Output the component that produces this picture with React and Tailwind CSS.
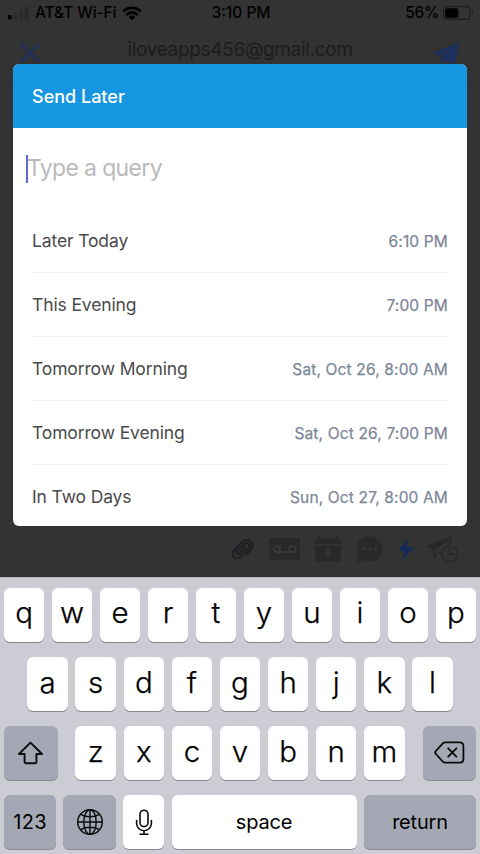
import React, { useState } from "react";
import clsx from "clsx";

const options = [
  { label: "Later Today", time: "6:10 PM" },
  { label: "This Evening", time: "7:00 PM" },
  { label: "Tomorrow Morning", time: "Sat, Oct 26, 8:00 AM" },
  { label: "Tomorrow Evening", time: "Sat, Oct 26, 7:00 PM" },
  { label: "In Two Days", time: "Sun, Oct 27, 8:00 AM" },
];

const SignalIcon = () => (
  <svg width="21" height="14" viewBox="0 0 21 14">
    <rect x="0" y="9" width="3.6" height="4.5" rx="1" fill="#000" />
    <rect x="5.6" y="6.5" width="3.6" height="7" rx="1" fill="#2a2a2a" />
    <rect x="11.2" y="3.5" width="3.6" height="10" rx="1" fill="#2a2a2a" />
    <rect x="16.8" y="0.5" width="3.6" height="13" rx="1" fill="#2a2a2a" />
  </svg>
);

const WifiIcon = () => (
  <svg width="20" height="15" viewBox="0 0 20 15" fill="none" stroke="#000" strokeWidth="2.8">
    <path d="M1.2 5.6a12.4 12.4 0 0 1 17.6 0" />
    <path d="M4.3 8.9a8 8 0 0 1 11.4 0" />
    <path d="M10 14.4 6.6 11a4.8 4.8 0 0 1 6.8 0z" fill="#000" stroke="none" />
  </svg>
);

const BatteryIcon = () => (
  <svg width="31" height="14" viewBox="0 0 31 14">
    <rect x="0.6" y="0.6" width="26.3" height="12.8" rx="3.4" fill="none" stroke="#1c1c1c" strokeWidth="1.1" />
    <rect x="2.2" y="2.2" width="13" height="9.6" rx="1.6" fill="#000" />
    <path d="M28.6 4.6c1.8.9 1.8 3.9 0 4.8z" fill="#1c1c1c" />
  </svg>
);

const CloseIcon = () => (
  <svg width="20" height="20" viewBox="0 0 20 20" stroke="#1e3059" strokeWidth="2.8">
    <path d="M1 1l18 18M19 1L1 19" />
  </svg>
);

const SendIcon = () => (
  <svg width="27" height="25" viewBox="0 0 27 25" fill="#1c2f5e">
    <path d="M26 0.5 0.5 10.8l6.4 3.4z" />
    <path d="M26 0.5 8 14.9v8.3l3.7-5.3z" />
    <path d="M26 0.5 10.6 16.6l10.6 6.6z" />
  </svg>
);

const PaperclipIcon = () => (
  <svg width="24" height="22" viewBox="0 0 24 22" fill="none" stroke="#1d1e21" strokeWidth="2" strokeLinecap="round">
    <path d="M15.6 9.3 9.4 15.4a1.7 1.7 0 0 1-2.5-2.4l7.4-7a3.1 3.1 0 0 1 4.4 4.4l-8.3 8.3a4.6 4.6 0 0 1-6.6-6.4L12.6 3.6a5.8 5.8 0 0 1 8.3 8.1l-5 5.1" />
  </svg>
);

const VoicemailIcon = () => (
  <svg width="31" height="22" viewBox="0 0 31 22">
    <rect width="31" height="22" rx="1" fill="#27292b" />
    <g fill="none" stroke="#38393b" strokeWidth="2">
      <circle cx="8" cy="11" r="3.1" />
      <circle cx="23.5" cy="11" r="3.1" />
      <path d="M8 14.1h15.5" />
    </g>
  </svg>
);

const CalendarIcon = () => (
  <svg width="26" height="25" viewBox="0 0 26 25" fill="#27292b">
    <path d="M0 2h2.8V0h3.4v2h13.6V0h3.4v2H26v5H0z" />
    <path d="M0.5 8.8h25v15.7h-25z" />
    <path d="M13 11.5v8.5M8.8 15.7h8.4" stroke="#38393b" strokeWidth="2" />
  </svg>
);

const ChatIcon = () => (
  <svg width="27" height="26" viewBox="0 0 27 26">
    <path d="M14 0.5a12.4 12.4 0 1 1-5.8 23.4C6 25.3 3 25.9 0.5 25.4c2-1.4 2.7-3 2.6-5A12.4 12.4 0 0 1 14 .5z" fill="#27292b" />
    <g fill="#38393b">
      <circle cx="8.3" cy="13" r="1.6" />
      <circle cx="13.9" cy="13" r="1.6" />
      <circle cx="19.5" cy="13" r="1.6" />
    </g>
  </svg>
);

const BoltIcon = () => (
  <svg width="16" height="23" viewBox="0 0 16 23" fill="#162a59">
    <path d="M10.2 0.6 0.4 12.2l6.2 1.6-2.6 8.6L15.6 9.8l-6.8-1.5z" />
  </svg>
);

const SendLaterIcon = () => (
  <svg width="33" height="27" viewBox="0 0 33 27" fill="none" stroke="#252729" strokeWidth="1.5" strokeLinejoin="round">
    <path d="M25 1.5 1.5 10l6.3 3.5z" fill="#252729" />
    <path d="M25 1.5 7.8 13.5v8l4.5-5.3 3 1.8M25 1.5l-2 7.5" />
    <circle cx="23.5" cy="18" r="7.8" />
    <path d="M23.5 12.6v5.7h4.8" />
  </svg>
);

const ShiftIcon = () => (
  <svg width="27" height="24" viewBox="0 0 27 24" fill="none" stroke="#0b0b0d" strokeWidth="1.9" strokeLinejoin="round">
    <path d="M13.5 1.6 25 13h-5.6v8q0 1.2-1.2 1.2H8.8q-1.2 0-1.2-1.2v-8H2z" />
  </svg>
);

const DeleteIcon = () => (
  <svg width="31" height="23" viewBox="0 0 31 23" fill="none" stroke="#0b0b0d" strokeWidth="1.8" strokeLinejoin="round" strokeLinecap="round">
    <path d="M11.2 1.3h14.6q3.6 0 3.6 3.6v13.2q0 3.6-3.6 3.6H11.2q-1.4 0-2.4-1L1.9 13q-1.5-1.5 0-3l6.9-7.7q1-1 2.4-1z" />
    <path d="M14.2 7.3l8.2 8.4M22.4 7.3l-8.2 8.4" />
  </svg>
);

const GlobeIcon = () => (
  <svg width="28" height="28" viewBox="0 0 28 28" fill="none" stroke="#0b0b0d" strokeWidth="1.4">
    <circle cx="14" cy="14" r="12.3" />
    <ellipse cx="14" cy="14" rx="6.2" ry="12.3" />
    <path d="M14 1.7v24.6M1.7 14h24.6M4.6 6.4c5.4 3.2 13.4 3.2 18.8 0M4.6 21.6c5.4-3.2 13.4-3.2 18.8 0" />
  </svg>
);

const MicIcon = () => (
  <svg width="18" height="27" viewBox="0 0 18 27" fill="none" stroke="#0b0b0d" strokeWidth="1.6" strokeLinecap="round">
    <rect x="5" y="1.2" width="8" height="16.4" rx="4" />
    <path d="M1.6 11.5v2.8a7.4 7.4 0 0 0 14.8 0v-2.8M9 21.7v3.6M5 25.3h8" />
  </svg>
);

const Key = ({ children, dark, className }) => (
  <button
    className={clsx(
      "h-[54px] shrink-0 flex items-center justify-center rounded-[6px] text-black shadow-[0_1px_0_#88898d]",
      dark ? "bg-[#a4a8b5]" : "bg-white",
      className
    )}
  >
    {children}
  </button>
);

const Letters = ({ row }) =>
  row.split("").map((letter) => (
    <Key key={letter} className="w-[40.6px] pb-[4px] text-[29.5px] font-light [-webkit-text-stroke:0.25px_black]">
      {letter}
    </Key>
  ));

const Keyboard = () => (
  <div className="flex-1 bg-[#cccdd4] border-t border-[#b0b1b5] pt-[9.5px] flex flex-col gap-[15.2px]">
    <div className="flex justify-center gap-[7.4px]">
      <Letters row="qwertyuiop" />
    </div>
    <div className="flex justify-center gap-[7.5px]">
      <Letters row="asdfghjkl" />
    </div>
    <div className="flex justify-between px-1">
      <Key dark className="w-[53.5px]">
        <ShiftIcon />
      </Key>
      <div className="flex gap-[7.5px]">
        <Letters row="zxcvbnm" />
      </div>
      <Key dark className="w-[53.5px]">
        <DeleteIcon />
      </Key>
    </div>
    <div className="flex justify-between px-1 text-[20px] tracking-[-0.2px]">
      <Key dark className="w-[52px]">
        <span className="tracking-[0.3px]">123</span>
      </Key>
      <Key dark className="w-[52.5px]">
        <GlobeIcon />
      </Key>
      <Key className="w-[40.6px]">
        <MicIcon />
      </Key>
      <Key className="w-[185px]">space</Key>
      <Key dark className="w-[112px]">
        return
      </Key>
    </div>
  </div>
);

const SendLaterModal = () => {
  const [query, setQuery] = useState("");

  return (
    <div className="absolute left-[13px] top-16 w-[454px] h-[462px] rounded-[6px] overflow-hidden bg-white">
      <div className="h-16 bg-[#1695e0] flex items-center px-[19px] text-white text-[18px] font-medium">
        Send Later
      </div>
      <div className="h-[81px] flex items-center px-[13px]">
        <div className="w-[2px] h-7 bg-[#5a6bd6]" />
        <input
          type="text"
          placeholder="Type a query"
          value={query}
          onChange={(e) => setQuery(e.target.value)}
          className="flex-1 -ml-px text-[23px] tracking-[-0.65px] placeholder:text-[#bababc] focus:outline-none bg-transparent"
        />
      </div>
      <ul className="px-[19px]">
        {options.map(({ label, time }) => (
          <li key={label} className="h-16 pt-[2px] flex items-center justify-between border-b border-[#f2f3f4]">
            <span className="text-[17.5px] tracking-[-0.13px] text-[#4a4a4a]">{label}</span>
            <span className="text-[15.5px] tracking-[0.15px] text-[#7c8797] [-webkit-text-stroke:0.25px_#7c8797]">
              {time}
            </span>
          </li>
        ))}
      </ul>
    </div>
  );
};

const App = () => (
  <div className="relative w-[480px] h-[854px] overflow-hidden flex flex-col bg-[#333333] font-['Inter','Liberation_Sans',sans-serif]">
    <div className="h-[26px] shrink-0 grid grid-cols-3 items-center pl-2 pr-[6px] text-[15.5px] font-medium text-black">
      <div className="flex items-center gap-[6px] whitespace-nowrap">
        <SignalIcon />
        <span className="tracking-[-0.1px]">AT&amp;T Wi-Fi</span>
        <WifiIcon />
      </div>
      <div className="text-center">3:10 PM</div>
      <div className="flex items-center justify-end gap-1">
        <span className="tracking-[-0.3px]">56%</span>
        <BatteryIcon />
      </div>
    </div>

    <div className="h-[57px] shrink-0 grid grid-cols-[30px_1fr_30px] items-start px-5 pt-4 border-b border-[#2d2d2d]">
      <div className="pt-px">
        <CloseIcon />
      </div>
      <div className="pt-px text-center text-[19px] tracking-[-0.32px] leading-[14px] text-[#1c1c1e]">
        iloveapps456@gmail.com
      </div>
      <div className="flex justify-end">
        <SendIcon />
      </div>
    </div>

    <div className="h-[438px] shrink-0 border-b border-[#2f2f2f]" />

    <div className="h-14 shrink-0 flex items-center justify-end gap-3 pr-[21px]">
      <div className="flex items-center gap-[15px]">
        <PaperclipIcon />
        <VoicemailIcon />
        <CalendarIcon />
        <ChatIcon />
        <BoltIcon />
      </div>
      <SendLaterIcon />
    </div>

    <Keyboard />
    <SendLaterModal />
  </div>
);

export default App;
